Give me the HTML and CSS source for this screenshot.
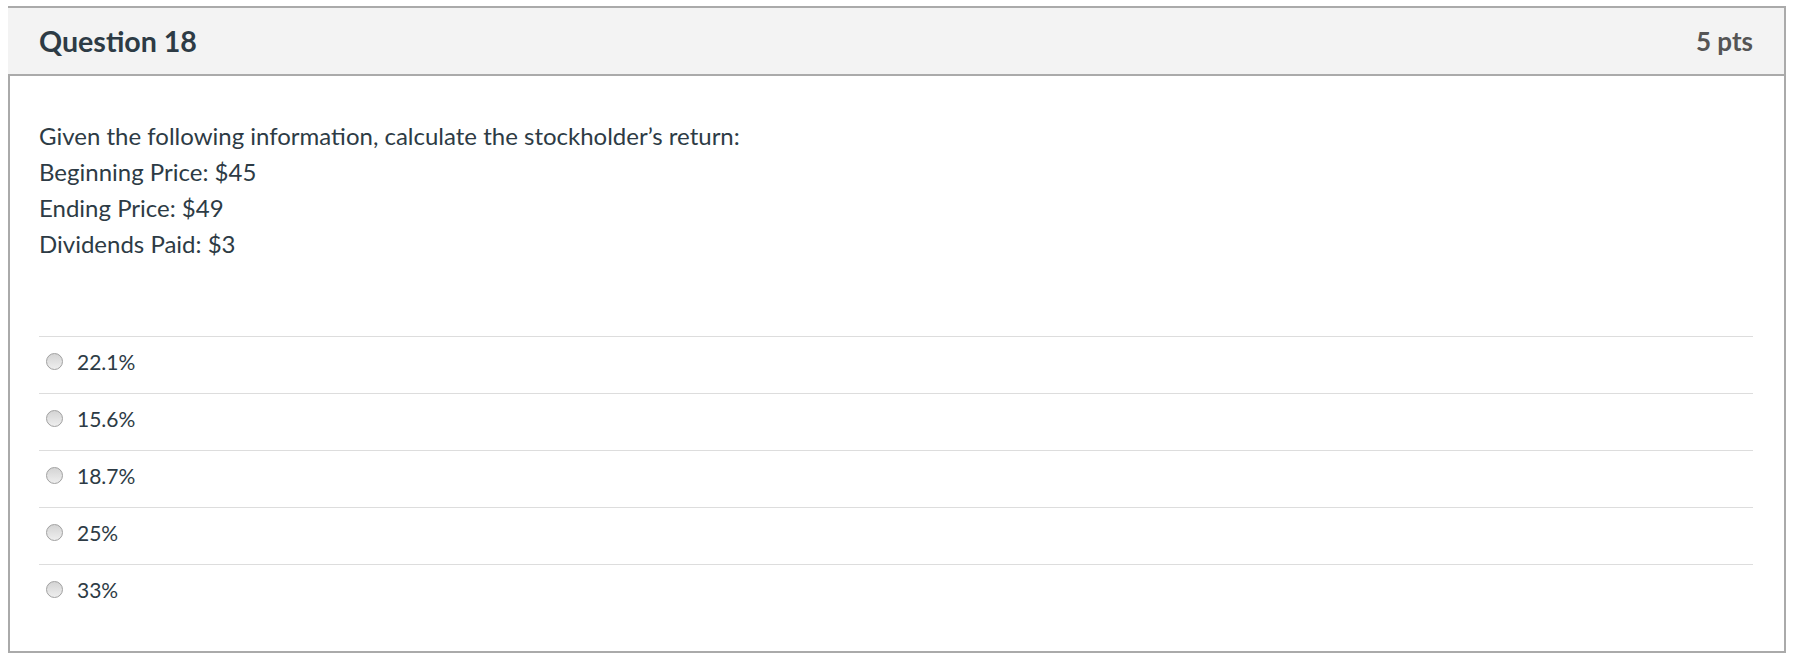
FILE: index.html
```html
<!DOCTYPE html>
<html>
<head>
<meta charset="utf-8">
<link rel="stylesheet" href="styles.css">
</head>
<body>
<div class="question">
  <div class="q-header">
    <h2 class="q-title">Question 18</h2>
    <span class="q-points">5 pts</span>
  </div>
  <div class="q-body">
    <div class="q-text">
      <p>Given the following information, calculate the stockholder’s return:</p>
      <p>Beginning Price: $45</p>
      <p>Ending Price: $49</p>
      <p>Dividends Paid: $3</p>
    </div>
    <div class="answers">
      <label class="answer"><span class="radio"></span><span class="answer-text">22.1%</span></label>
      <label class="answer"><span class="radio"></span><span class="answer-text">15.6%</span></label>
      <label class="answer"><span class="radio"></span><span class="answer-text">18.7%</span></label>
      <label class="answer"><span class="radio"></span><span class="answer-text">25%</span></label>
      <label class="answer"><span class="radio"></span><span class="answer-text">33%</span></label>
    </div>
  </div>
</div>
</body>
</html>
```

FILE: styles.css
```css
html, body {
  margin: 0;
  padding: 0;
  background: #ffffff;
}
body {
  padding: 6px 8px 10px 8px;
  font-family: Lato, "Open Sans", sans-serif;
  color: #2d3b45;
}
.question {
  width: 1778px;
  box-sizing: border-box;
}
.q-header {
  display: flex;
  align-items: center;
  justify-content: space-between;
  height: 70px;
  box-sizing: border-box;
  background: #f3f3f3;
  border-top: 2px solid #aaaaaa;
  border-right: 2px solid #aaaaaa;
  border-bottom: 2px solid #aaaaaa;
  padding: 0 31px 0 31px;
}
.q-title {
  margin: 0;
  font-size: 28.6px;
  font-weight: 700;
  color: #2d3b45;
}
.q-points {
  font-size: 26px;
  font-weight: 700;
  color: #555555;
}
.q-body {
  border-left: 2px solid #aaaaaa;
  border-right: 2px solid #aaaaaa;
  border-bottom: 2px solid #aaaaaa;
  padding: 42px 31px 30px 29px;
}
.q-text {
  font-size: 24px;
  line-height: 36px;
  margin-bottom: 74px;
}
.q-text p {
  margin: 0;
}
.answers {
  display: flex;
  flex-direction: column;
}
.answer {
  display: flex;
  align-items: center;
  gap: 14px;
  height: 57px;
  box-sizing: border-box;
  padding-bottom: 7px;
  border-top: 1.5px solid #dddddd;
  padding-left: 7px;
  font-size: 21px;
}
.radio {
  width: 15px;
  height: 15px;
  border-radius: 50%;
  border: 1px solid #a0a0a0;
  background: linear-gradient(#d4d4d4, #eeeeee);
  flex: none;
}
.answer-text {
  color: #2d3b45;
}
```
